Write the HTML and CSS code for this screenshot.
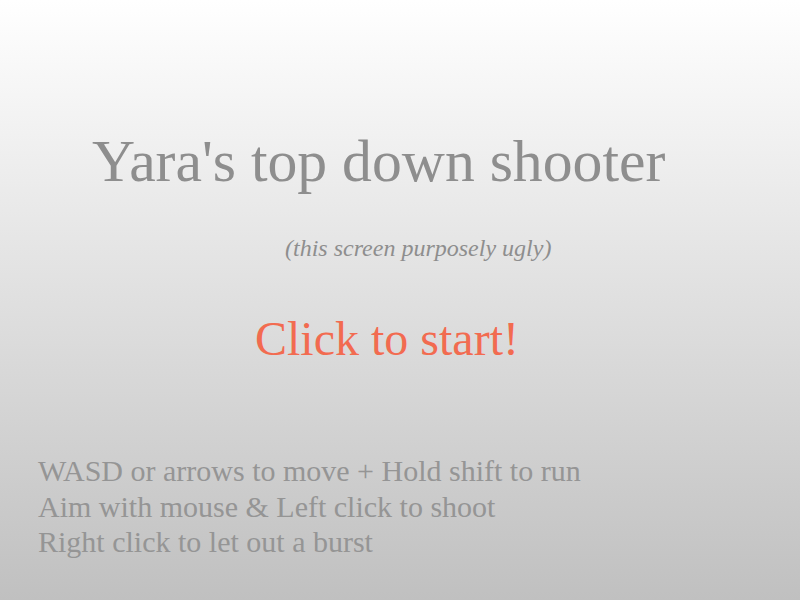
FILE: index.html
```html
<!DOCTYPE html>
<html>
<head>
<meta charset="utf-8">
<link rel="stylesheet" href="styles.css">
</head>
<body>
<main class="screen">
  <h1 class="title">Yara's top down shooter</h1>
  <p class="subtitle">(this screen purposely ugly)</p>
  <p class="start">Click to start!</p>
  <div class="help">
    <p>WASD or arrows to move + Hold shift to run</p>
    <p>Aim with mouse &amp; Left click to shoot</p>
    <p>Right click to let out a burst</p>
  </div>
</main>
</body>
</html>
```
FILE: styles.css
```css
html, body {
  margin: 0;
  padding: 0;
}
body {
  width: 800px;
  height: 600px;
  overflow: hidden;
  font-family: "Liberation Serif", "Times New Roman", serif;
}
.screen {
  width: 800px;
  height: 600px;
  background: linear-gradient(to bottom, #ffffff 0%, #c0c0c0 100%);
  display: flex;
  flex-direction: column;
  align-items: flex-start;
}
.screen p, .screen h1 {
  margin: 0;
  font-weight: normal;
}
.title {
  margin-top: 131px !important;
  margin-left: 92px !important;
  font-size: 59.7px;
  line-height: 60px;
  color: #8e8e8e;
}
.subtitle {
  margin-top: 45px !important;
  margin-left: 285px !important;
  font-size: 24px;
  line-height: 24px;
  font-style: italic;
  color: #8e8e8e;
}
.start {
  margin-top: 55px !important;
  margin-left: 255px !important;
  font-size: 48px;
  line-height: 48px;
  color: #f26b50;
}
.help {
  margin-top: 90px;
  margin-left: 38px;
  font-size: 30px;
  line-height: 35.5px;
  color: #959595;
}
```
